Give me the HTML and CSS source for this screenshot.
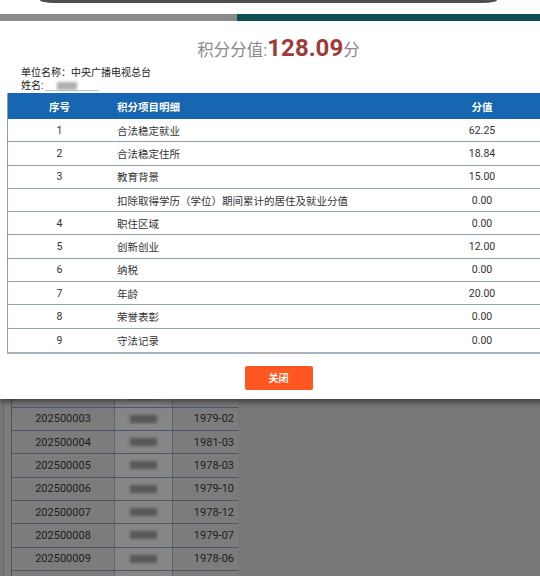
FILE: index.html
```html
<!DOCTYPE html>
<html lang="zh-CN">
<head>
<meta charset="utf-8">
<title>积分分值</title>
<link rel="stylesheet" href="styles.css">
</head>
<body>
<div class="page">
  <div class="list">
    <div class="lrow"><div class="c1">202500001</div><div class="c2"><span class="blob"></span></div><div class="c3">1980-05</div></div>
    <div class="lrow"><div class="c1">202500002</div><div class="c2"><span class="blob"></span></div><div class="c3">1979-11</div></div>
    <div class="lrow"><div class="c1">202500003</div><div class="c2"><span class="blob"></span></div><div class="c3">1979-02</div></div>
    <div class="lrow"><div class="c1">202500004</div><div class="c2"><span class="blob"></span></div><div class="c3">1981-03</div></div>
    <div class="lrow"><div class="c1">202500005</div><div class="c2"><span class="blob"></span></div><div class="c3">1978-03</div></div>
    <div class="lrow"><div class="c1">202500006</div><div class="c2"><span class="blob"></span></div><div class="c3">1979-10</div></div>
    <div class="lrow"><div class="c1">202500007</div><div class="c2"><span class="blob"></span></div><div class="c3">1978-12</div></div>
    <div class="lrow"><div class="c1">202500008</div><div class="c2"><span class="blob"></span></div><div class="c3">1979-07</div></div>
    <div class="lrow"><div class="c1">202500009</div><div class="c2"><span class="blob"></span></div><div class="c3">1978-06</div></div>
    <div class="lrow"><div class="c1"></div><div class="c2"><span class="blob"></span></div><div class="c3"></div></div>
  </div>
</div>

<div class="dialog">
  <div class="pill"></div>
  <div class="tabs"><div class="tab-a"></div><div class="tab-b"></div></div>
  <div class="score"><span class="lbl">积分分值:</span><span class="num">128.09</span><span class="lbl">分</span></div>
  <div class="info">
    <div>单位名称：中央广播电视总台</div>
    <div>姓名:<span class="name"><span class="name-blur"></span></span></div>
  </div>
  <div class="grid">
    <div class="row head"><div>序号</div><div>积分项目明细</div><div>分值</div></div>
    <div class="row"><div>1</div><div>合法稳定就业</div><div>62.25</div></div>
    <div class="row"><div>2</div><div>合法稳定住所</div><div>18.84</div></div>
    <div class="row"><div>3</div><div>教育背景</div><div>15.00</div></div>
    <div class="row"><div></div><div>扣除取得学历（学位）期间累计的居住及就业分值</div><div>0.00</div></div>
    <div class="row"><div>4</div><div>职住区域</div><div>0.00</div></div>
    <div class="row"><div>5</div><div>创新创业</div><div>12.00</div></div>
    <div class="row"><div>6</div><div>纳税</div><div>0.00</div></div>
    <div class="row"><div>7</div><div>年龄</div><div>20.00</div></div>
    <div class="row"><div>8</div><div>荣誉表彰</div><div>0.00</div></div>
    <div class="row"><div>9</div><div>守法记录</div><div>0.00</div></div>
  </div>
  <div class="actions"><button class="close" type="button">关闭</button></div>
</div>
</body>
</html>
```

FILE: styles.css
```css
* { box-sizing: border-box; }
html, body { margin: 0; }
body {
  width: 540px;
  height: 576px;
  overflow: hidden;
  position: relative;
  background: #787878;
  font-family: Roboto, "Noto Sans CJK SC", sans-serif;
}

/* dimmed page underneath */
.page { padding: 361px 0 0 3px; }
.list {
  width: 235px;
  border-left: 1px solid #666;
  padding-left: 7px;
  background: #7c7c7c;
}
.lrow {
  display: grid;
  grid-template-columns: 102px 59px 66px;
  height: 23.33px;
  align-items: center;
  border-left: 1px solid #4b5766;
  border-bottom: 1px solid #4b5766;
  font-size: 11px;
  color: #1c1c1c;
}
.lrow > div { height: 100%; display: flex; align-items: center; }
.c1 { justify-content: center; }
.c2 {
  justify-content: center;
  background: #868686;
  border-left: 1px solid #5a6573;
  border-right: 1px solid #5a6573;
}
.c3 { justify-content: flex-end; padding-right: 5px; }
.blob {
  width: 27px;
  height: 8px;
  background: #575757;
  filter: blur(1.5px);
}

/* dialog overlay */
.dialog {
  position: absolute;
  top: 0;
  left: 0;
  width: 557px;
  background: #fff;
  padding-bottom: 9px;
  box-shadow: 0 3px 6px rgba(0, 0, 0, 0.5);
}
.pill {
  margin-left: 40px;
  width: 457px;
  height: 3px;
  background: #4e4e4e;
  border-radius: 0 0 14px 14px / 0 0 3px 3px;
}
.tabs { display: flex; height: 7px; margin-top: 11px; }
.tab-a { width: 237px; background: #8a8a8a; }
.tab-b { flex: 1; background: #0d4f55; }

.score {
  margin-top: 12px;
  height: 30px;
  line-height: 30px;
  text-align: center;
  white-space: nowrap;
}
.score .lbl { font-size: 16.5px; color: #8a8a8a; }
.score .num { font-size: 24px; font-weight: 700; color: #a03a3a; }

.info {
  margin: 3px 0 0 21px;
  font-size: 10px;
  line-height: 13px;
  color: #222;
}
.name {
  display: inline-block;
  position: relative;
  width: 54px;
  height: 12px;
  vertical-align: top;
  margin-left: 2px;
  border-bottom: 1px solid #a9cbea;
}
.name-blur {
  position: absolute;
  left: 12px;
  top: 3px;
  width: 20px;
  height: 8px;
  background: #b0b0b0;
  filter: blur(1.5px);
}

.grid {
  margin: 1px 7px 0;
  border-left: 1px solid #8fa0b2;
  border-bottom: 2px solid #aab4be;
  font-size: 10.5px;
  color: #333;
}
.row {
  display: grid;
  grid-template-columns: 103px 1fr 136px;
  height: 23.3px;
  align-items: center;
  border-bottom: 1px solid #8fa0b2;
}
.row:last-child { border-bottom: none; }
.row > div:first-child { text-align: center; }
.row > div:nth-child(2) { padding-left: 6px; white-space: nowrap; }
.row > div:last-child { text-align: center; }
.row.head {
  height: 26px;
  background: #1666b2;
  color: #fff;
  font-weight: 700;
  border-bottom: none;
}

.actions { display: flex; justify-content: center; margin-top: 12px; }
.close {
  width: 68px;
  height: 24px;
  padding: 0;
  border: 0;
  border-radius: 2px;
  background: #fe5722;
  color: #fff;
  font: 700 10px Roboto, "Noto Sans CJK SC", sans-serif;
}
```
